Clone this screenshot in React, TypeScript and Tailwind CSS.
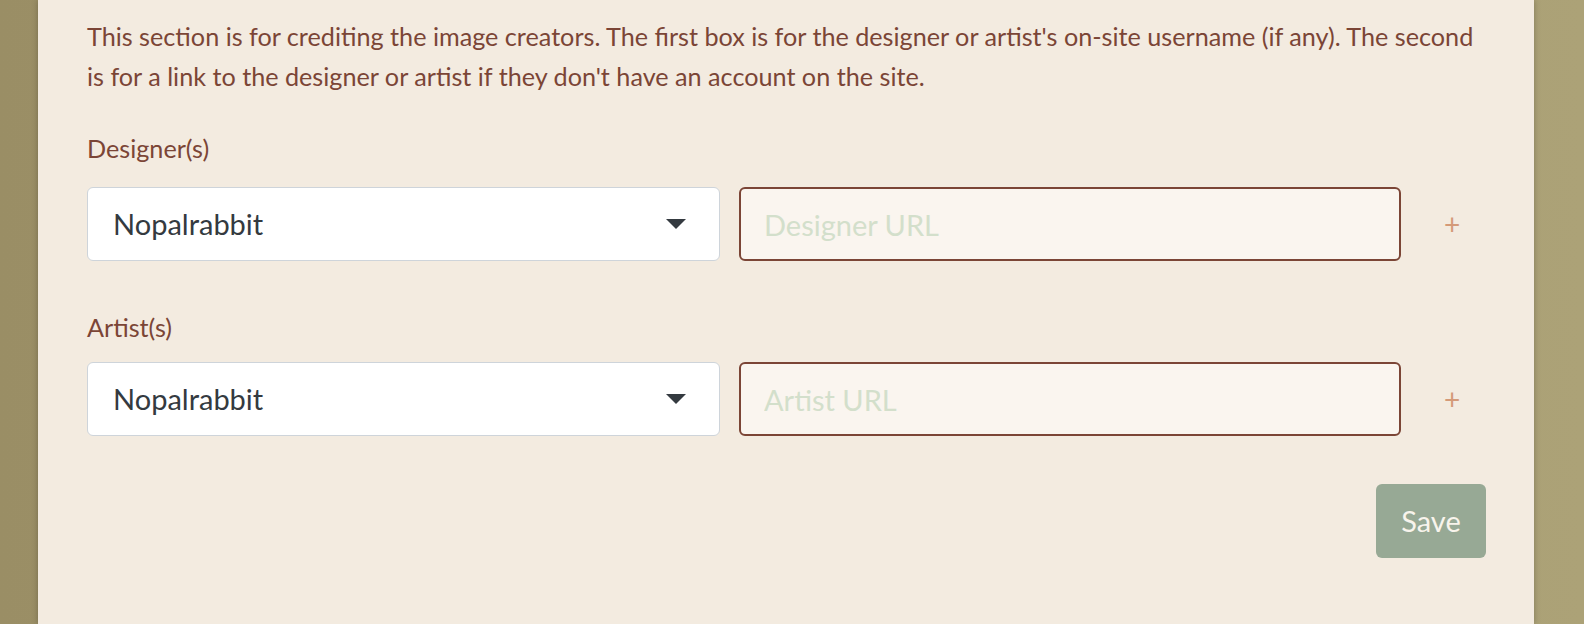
export default function App() {
  return (
    <div className="flex h-[624px] w-full bg-gradient-to-r from-[#9a8e65] to-[#aca277] font-['Lato',sans-serif]">
      <div className="ml-[38px] w-[1496px] bg-[#f3ebe0] pl-[49px] pr-[48px] pt-[16px] shadow-[0_0_6px_rgba(0,0,0,0.25)]">
        <p className="text-[25.2px] leading-[40px] text-[#7b4536]">
          This section is for crediting the image creators. The first box is for the designer or artist's on-site username (if any). The second is for a link to the designer or artist if they don't have an account on the site.
        </p>

        <CreditRow label="Designer(s)" placeholder="Designer URL" top="mt-[32px]" gap="mt-[19px]" />
        <CreditRow label="Artist(s)" placeholder="Artist URL" top="mt-[46px]" gap="mt-[15px]" />

        <div className="mt-[48px] flex justify-end">
          <button className="h-[74px] w-[110px] rounded-[6px] bg-[#97a995] text-[29px] text-[#f8f4ec]">
            Save
          </button>
        </div>
      </div>
    </div>
  );
}

function CreditRow({
  label,
  placeholder,
  top,
  gap,
}: {
  label: string;
  placeholder: string;
  top: string;
  gap: string;
}) {
  return (
    <div className={top}>
      <label className="block text-[25.2px] leading-[40px] text-[#7b4536]">{label}</label>
      <div className={`${gap} flex items-center`}>
        <div className="flex h-[74px] w-[633px] items-center justify-between rounded-[6px] border-[1.5px] border-[#ced4da] bg-white pl-[25px] pr-[33px]">
          <span className="text-[29px] text-[#343a40]">Nopalrabbit</span>
          <svg width="20" height="10" viewBox="0 0 20 10">
            <path d="M0 0 L20 0 L10 10 Z" fill="#343a40" />
          </svg>
        </div>
        <input
          placeholder={placeholder}
          className="ml-[19px] h-[74px] w-[662px] rounded-[6px] border-2 border-[#7b4536] bg-[#faf5ef] px-[23px] text-[29px] text-[#343a40] outline-none placeholder:text-[#d3dfcb]"
        />
        <span className="w-[85px] pl-[17px] text-center text-[28px] text-[#d49a78]">+</span>
      </div>
    </div>
  );
}
